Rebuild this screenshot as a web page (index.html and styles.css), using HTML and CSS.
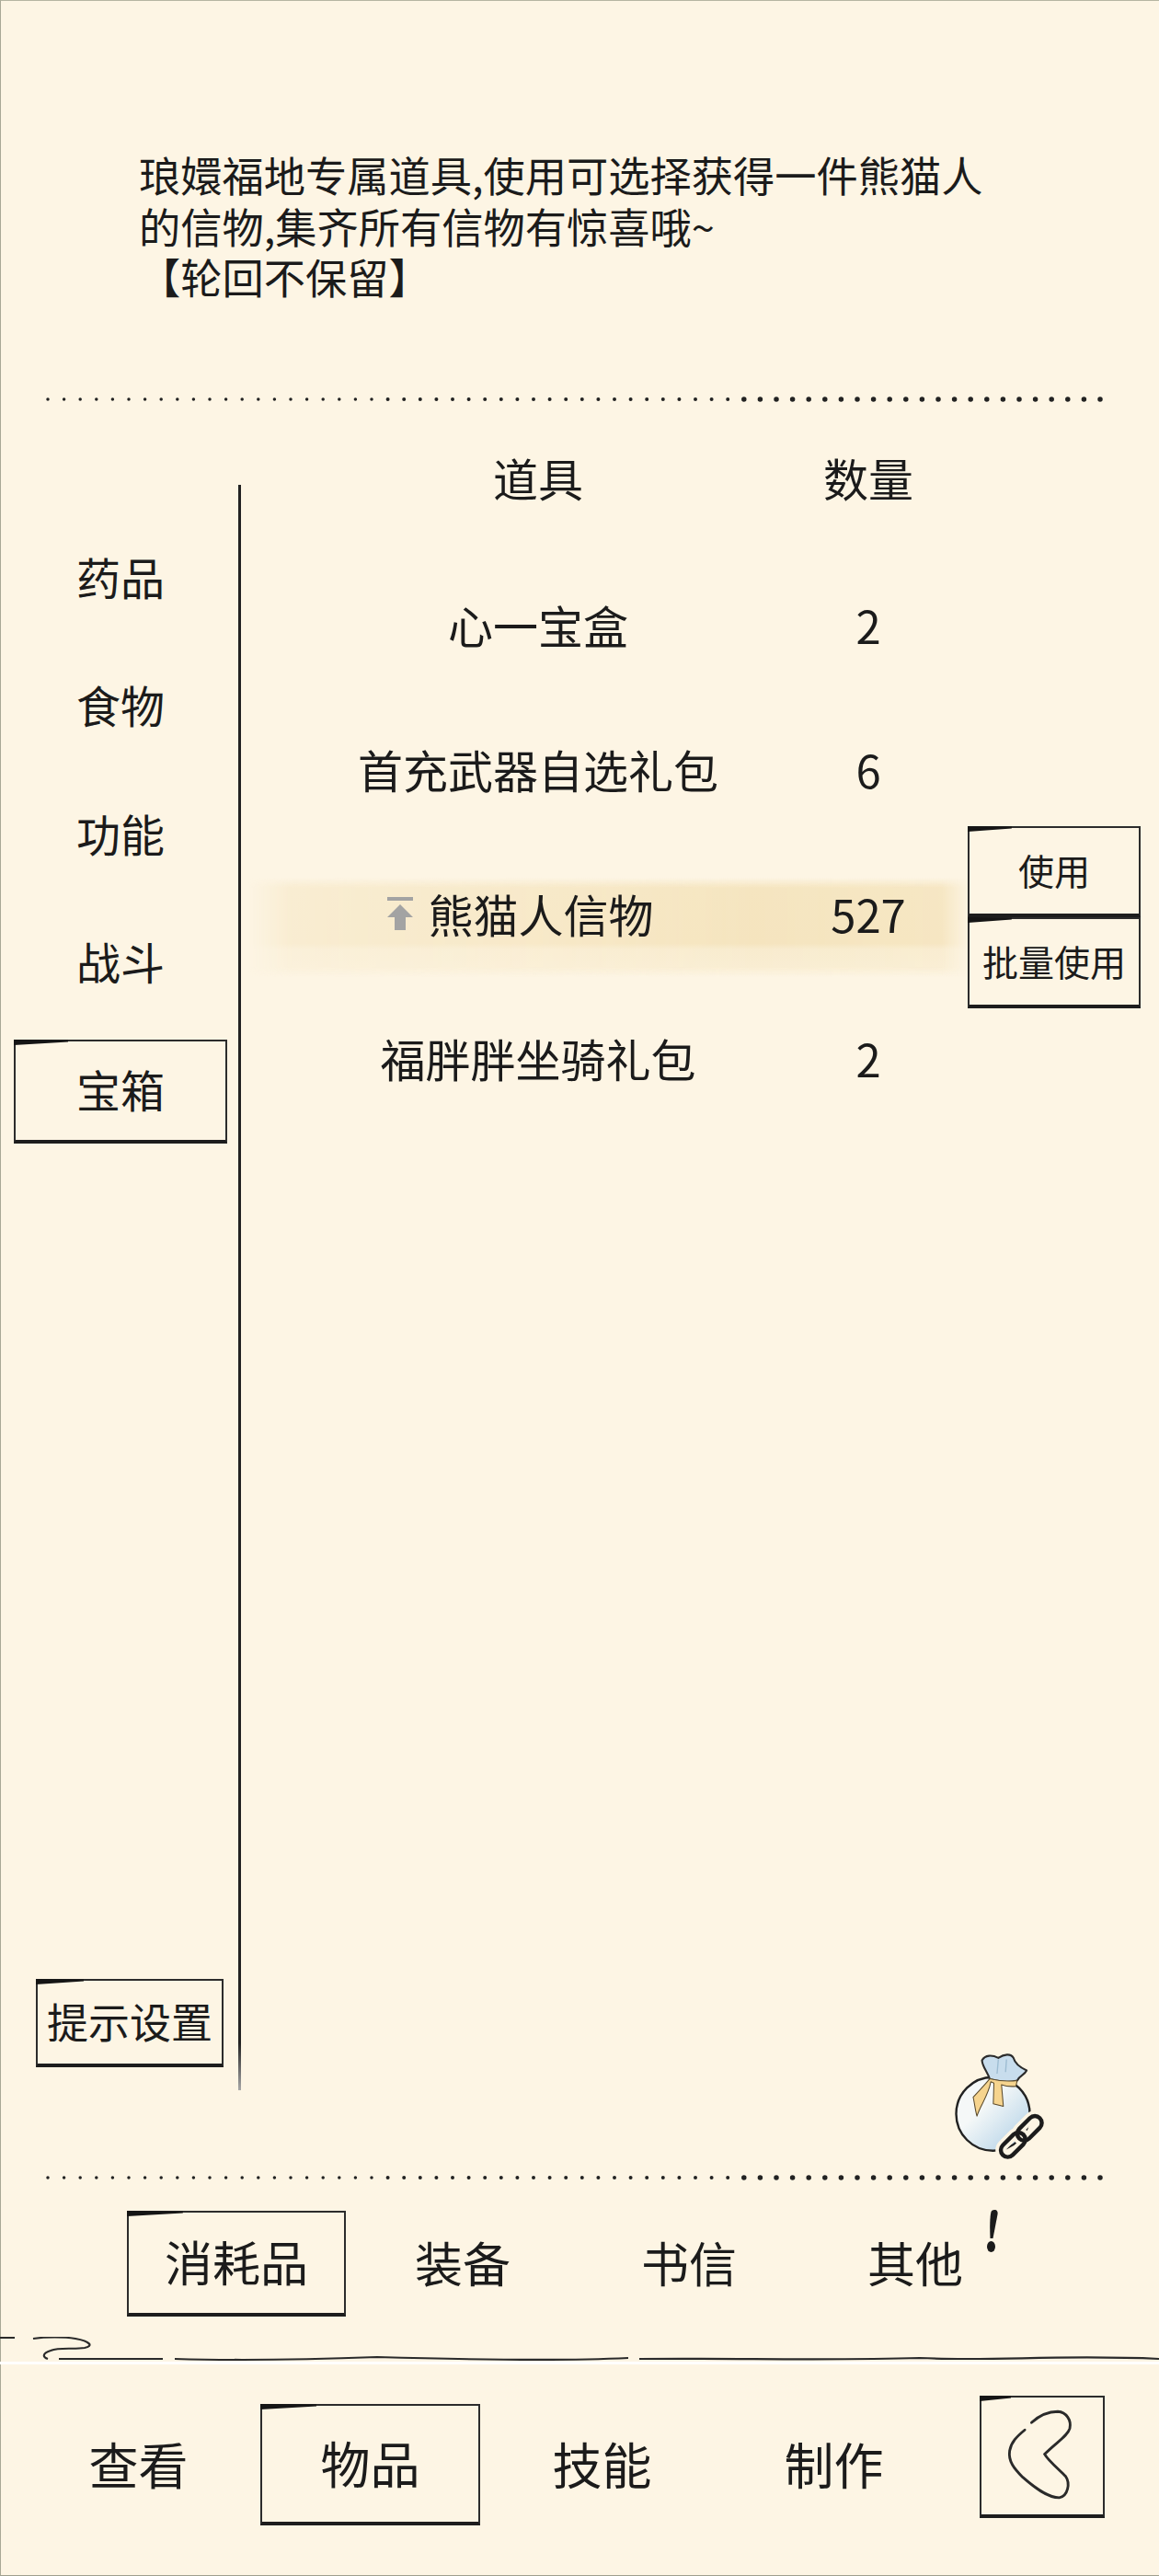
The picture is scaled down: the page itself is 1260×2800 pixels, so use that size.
FILE: index.html
```html
<!DOCTYPE html>
<html lang="zh-CN">
<head>
<meta charset="utf-8">
<title>物品</title>
<link rel="stylesheet" href="styles.css">
</head>
<body>
<svg class="defs" width="0" height="0" aria-hidden="true">
  <defs>
    <symbol id="dots" viewBox="0 0 1260 18">
      <line class="dot d1" x1="52" y1="9" x2="408" y2="9"/>
      <line class="dot d2" x1="421.600" y1="9" x2="795" y2="9"/>
      <line class="dot d3" x1="808.800" y1="9" x2="1208" y2="9"/>
    </symbol>
    <linearGradient id="bagFill" x1="0.1" y1="0.1" x2="0.9" y2="0.9">
      <stop offset="0.35" stop-color="#f5f8f8"/>
      <stop offset="1" stop-color="#b5d3e8"/>
    </linearGradient>
  </defs>
</svg>
<div class="page">
  <section class="desc">
    <p>琅嬛福地专属道具,使用可选择获得一件熊猫人<br>的信物,集齐所有信物有惊喜哦~<br>【轮回不保留】</p>
  </section>
  <svg class="dots"><use href="#dots"/></svg>
  <section class="content">
    <aside class="sidebar">
      <div class="side-item">药品</div>
      <div class="side-item">食物</div>
      <div class="side-item">功能</div>
      <div class="side-item">战斗</div>
      <div class="side-item frame">宝箱</div>
      <div class="hint frame">提示设置</div>
    </aside>
    <div class="list">
      <div class="row head"><span>道具</span><span>数量</span></div>
      <div class="row"><span>心一宝盒</span><span>2</span></div>
      <div class="row"><span>首充武器自选礼包</span><span>6</span></div>
      <div class="row selected">
        <span class="name-up">
          <svg class="up" viewBox="0 0 28 36"><path d="M0 0h28v4H0zM14 8l14 14H20v14H8V22H0z"/></svg>
          熊猫人信物
        </span>
        <span>527</span>
        <div class="actions">
          <div class="act frame">使用</div>
          <div class="act frame">批量使用</div>
        </div>
      </div>
      <div class="row"><span>福胖胖坐骑礼包</span><span>2</span></div>
    </div>
    <svg class="bag" viewBox="230 90 285 345">
      <circle cx="355" cy="288" r="117" fill="url(#bagFill)" stroke="#222" stroke-width="7"/>
      <path d="M345 178C338 155 322 140 320 118C330 100 352 100 372 110C390 98 412 95 420 110C424 125 440 140 462 150C455 165 440 165 432 182C405 190 370 185 345 178Z" fill="#c8dded" stroke="#2b2b2b" stroke-width="6" stroke-linejoin="round"/>
      <path d="M372 115L368 160M398 115L395 155" fill="none" stroke="#9dbcd2" stroke-width="4"/>
      <path d="M345 176C370 182 405 186 432 182L428 200C410 202 390 198 382 195L388 264L356 256L358 190L348 186C340 230 315 260 304 295C298 275 296 250 292 235C310 215 330 195 345 176Z" fill="#f6d48e" stroke="#5a4a2c" stroke-width="3" stroke-linejoin="round"/>
      <g transform="rotate(-45 445 360)" fill="none">
        <rect x="362" y="338" width="92" height="44" rx="22" stroke="#fdf5e4" stroke-width="34"/>
        <rect x="436" y="338" width="92" height="44" rx="22" stroke="#fdf5e4" stroke-width="34"/>
        <rect x="362" y="338" width="92" height="44" rx="22" stroke="#1c1c1c" stroke-width="13"/>
        <rect x="436" y="338" width="92" height="44" rx="22" stroke="#1c1c1c" stroke-width="13"/>
      </g>
    </svg>
  </section>
  <svg class="dots"><use href="#dots"/></svg>
  <nav class="tabs">
    <div class="tab frame">消耗品</div>
    <div class="tab">装备</div>
    <div class="tab">书信</div>
    <div class="tab">其他
      <svg class="bang" viewBox="0 0 12 46"><path d="M8 0c3 0 4 2 3.500 5L6.500 31H3.500C3 20 3 8 4.500 2 5 .7 6.500 0 8 0Z"/><ellipse cx="4.500" cy="40" rx="4.500" ry="6"/></svg>
    </div>
  </nav>
  <svg class="divider" viewBox="0 0 1260 27" preserveAspectRatio="none">
    <path d="M0 1H16M36 2C50 0 70 0 82 2C98 5 102 10 92 12C80 14 65 11 55 15C46 18 46 22 52 24M64 24H177M190 24C260 26 330 25 410 22C480 24 600 27 683 23M695 24C800 23 900 26 1000 23C1080 27 1150 19 1260 24" fill="none" stroke="#2a2a2a" stroke-width="2.200"/>
  </svg>
  <div class="whiteline"></div>
  <nav class="nav">
    <div class="nav-item">查看</div>
    <div class="nav-item frame">物品</div>
    <div class="nav-item">技能</div>
    <div class="nav-item">制作</div>
    <div class="back frame">
      <svg viewBox="78 72 407 400"><path d="M245 158C270 135 300 120 335 120C365 122 382 150 376 178C368 205 330 225 290 266C300 285 335 315 362 342C378 365 370 410 340 415C300 415 255 380 215 345C185 315 165 290 170 255C175 225 195 205 222 183" fill="none" stroke="#2a2a2a" stroke-width="9" stroke-linecap="round"/></svg>
    </div>
  </nav>
</div>
</body>
</html>
```
FILE: styles.css
```css
* { box-sizing: border-box; }
html, body { margin: 0; padding: 0; }
body {
  width: 1260px;
  height: 2800px;
  overflow: hidden;
  background: #fdf5e4;
  color: #1b1b1b;
  font-family: "Noto Sans CJK SC", "Noto Sans", sans-serif;
}
.defs { position: absolute; }
.page {
  width: 1260px;
  height: 2800px;
  display: flex;
  flex-direction: column;
  border-left: 1px solid #a8a896;
  border-top: 1px solid #b5b5a2;
  border-bottom: 1px solid #9f9f8e;
}

/* description */
.desc { height: 424px; padding: 161px 0 0 150px; flex: none; }
.desc p { margin: 0; font-size: 45.250px; line-height: 55.500px; white-space: nowrap; }

/* dotted rule */
.dots { width: 1260px; height: 18px; flex: none; display: block; margin-left: -1px; }
.dot { stroke: #222; stroke-linecap: round; stroke-dasharray: 0 17.600; }
.d1 { stroke-width: 3.500; }
.d2 { stroke-width: 4; }
.d3 { stroke-width: 5.500; }

/* sketch frame */
.frame {
  position: relative;
  border: 2px solid #2c2c2c;
  border-bottom: 4px solid #1d1d1d;
}
.frame::before {
  content: "";
  position: absolute;
  top: -2px;
  left: -2px;
  width: 26%;
  height: 6px;
  background: #151515;
  clip-path: polygon(0 0, 100% 10%, 100% 40%, 0 100%);
}

/* main area */
.content { position: relative; display: flex; height: 1915px; flex: none; }
.sidebar {
  width: 261px;
  height: 1745px;
  margin-top: 84px;
  padding: 45px 0 25px 14px;
  flex: none;
  display: flex;
  flex-direction: column;
  gap: 26.500px;
  border-right: 3px solid #222;
  border-image: linear-gradient(180deg, #222 97%, #aaa 100%) 1;
  font-size: 48px;
}
.side-item {
  width: 232px;
  height: 113px;
  padding-bottom: 6px;
  flex: none;
  display: flex;
  align-items: center;
  justify-content: center;
}
.hint {
  margin: auto 0 0 24px;
  width: 204px;
  height: 96px;
  padding-bottom: 3px;
  display: flex;
  align-items: center;
  justify-content: center;
  font-size: 45px;
  white-space: nowrap;
}
.list { flex: 1; padding-top: 40px; font-size: 49px; }
.row {
  position: relative;
  display: grid;
  grid-template-columns: 646px 72px;
  align-items: center;
  justify-items: center;
  height: 157px;
}
.row > span { position: relative; white-space: nowrap; }
.head { height: 60px; margin-bottom: 57px; }
.selected::before {
  content: "";
  position: absolute;
  left: 8px;
  top: 40px;
  width: 785px;
  height: 108px;
  background: linear-gradient(180deg, transparent 0, #f5e5c0 10%, #f5e4be 66%, #f8ebce 72%, #f9edd2 90%, transparent 100%);
  -webkit-mask-image: linear-gradient(90deg, transparent 0, rgba(0,0,0,.5) 6%, rgba(0,0,0,.7) 35%, #000 70%, rgba(0,0,0,.9) 96%, transparent 100%);
  mask-image: linear-gradient(90deg, transparent 0, rgba(0,0,0,.5) 6%, rgba(0,0,0,.7) 35%, #000 70%, rgba(0,0,0,.9) 96%, transparent 100%);
}
.name-up { margin-left: 6px; }
.up {
  position: absolute;
  right: 100%;
  top: 18px;
  width: 28px;
  height: 36px;
  margin-right: 16px;
  fill: #a3a3a3;
}
.actions {
  position: absolute;
  left: 790px;
  top: -16px;
  width: 188px;
}
.act {
  height: 99px;
  padding-bottom: 4px;
  display: flex;
  align-items: center;
  justify-content: center;
  font-size: 39px;
  white-space: nowrap;
}
.bag {
  position: absolute;
  left: 1035px;
  top: 1787px;
  width: 99px;
  height: 118px;
}

/* category tabs */
.tabs {
  height: 164px;
  flex: none;
  display: flex;
  gap: 8px;
  padding: 27px 0 0 137px;
  font-size: 52px;
}
.tab {
  position: relative;
  width: 238px;
  height: 115px;
  padding-bottom: 4px;
  display: flex;
  align-items: center;
  justify-content: center;
}
.bang {
  position: absolute;
  left: 197px;
  top: -1px;
  width: 12px;
  height: 46px;
  fill: #1b1b1b;
}
.divider { width: 1260px; height: 27px; flex: none; display: block; margin-left: -1px; }
.whiteline { height: 3px; flex: none; background: #fff; margin-left: -1px; }

/* bottom navigation */
.nav {
  flex: 1;
  display: flex;
  gap: 13px;
  padding: 43px 0 0 30px;
  font-size: 54px;
}
.nav-item {
  width: 239px;
  height: 132px;
  padding-bottom: 4px;
  display: flex;
  align-items: center;
  justify-content: center;
}
.back {
  width: 136px;
  height: 133px;
  margin: -9px 0 0 26px;
}
.back svg { display: block; width: 100%; height: 100%; }
```
